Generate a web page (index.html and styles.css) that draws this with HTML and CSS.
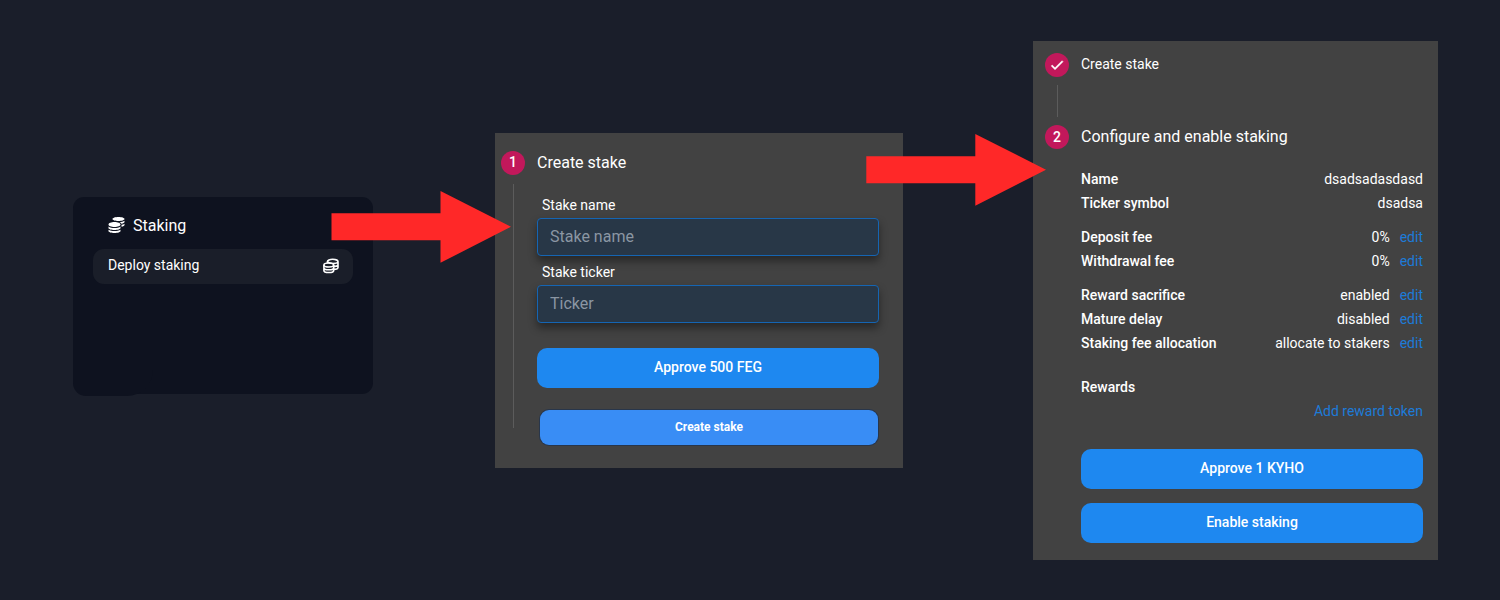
FILE: index.html
```html
<!DOCTYPE html>
<html lang="en">
<head>
<meta charset="utf-8">
<title>Staking</title>
<link rel="stylesheet" href="styles.css">
</head>
<body>
<main class="stage">
  <section class="menu">
    <h2 class="menu-title">
      <svg class="coins" viewBox="0 0 512 512" fill="currentColor"><path d="M0 405.3V448c0 35.3 86 64 192 64s192-28.700 192-64v-42.700C342.700 434.400 267.200 448 192 448S41.300 434.400 0 405.300zM320 128c106 0 192-28.700 192-64S426 0 320 0 128 28.700 128 64s86 64 192 64zM0 300.400V352c0 35.300 86 64 192 64s192-28.700 192-64v-51.600c-41.300 34-116.900 51.600-192 51.600S41.300 334.400 0 300.400zm416 11c57.300-11.100 96-31.700 96-55.400v-42.700c-23.200 16.400-57.300 27.600-96 34.500v63.600zM192 160C86 160 0 195.800 0 240s86 80 192 80 192-35.800 192-80-86-80-192-80zm219.300 56.300c60-10.800 100.700-32 100.700-56.300v-42.700c-35.500 25.100-96.500 38.600-160.700 41.800 29.500 14.300 51.200 33.500 60 57.200z"/></svg>
      <span>Staking</span>
    </h2>
    <div class="menu-item">
      <span>Deploy staking</span>
      <svg class="coins-outline" viewBox="0 0 16 16" fill="none" stroke="currentColor" stroke-width="1.600"><ellipse cx="5.800" cy="7" rx="4.900" ry="2"/><path d="M.9 7v5.400c0 1.200 2 2.100 4.900 2.100s4.900-.9 4.900-2.100V7M.9 9.700c0 1.200 2 2.100 4.900 2.100s4.900-.9 4.900-2.100M4.400 5V3.500c0-1.200 2.300-2.300 5.200-2.300s5.400 1.100 5.400 2.300v5.900c0 1-1.700 1.900-4.300 2.100M4.600 3.800c.8 1.100 2.800 1.700 5 1.700 2.900 0 5.400-.9 5.400-2M10.700 8.600c2.600-.2 4.300-1 4.300-2.100"/></svg>
    </div>
  </section>

  <section class="panel create">
    <header class="step"><span class="badge">1</span><h2 class="step-title">Create stake</h2></header>
    <div class="step-body">
      <label class="label" for="name">Stake name</label>
      <input class="field" id="name" placeholder="Stake name">
      <label class="label" for="ticker">Stake ticker</label>
      <input class="field" id="ticker" placeholder="Ticker">
      <button class="button approve">Approve 500 FEG</button>
      <button class="button submit">Create stake</button>
    </div>
  </section>

  <section class="panel configure">
    <header class="step"><span class="badge"><svg class="check" viewBox="0 0 24 24" fill="currentColor" stroke="currentColor" stroke-width=".8"><path d="M9 16.200 4.800 12l-1.400 1.400L9 19 21 7l-1.400-1.400z"/></svg></span><h3 class="step-title done">Create stake</h3></header>
    <div class="connector"></div>
    <header class="step"><span class="badge">2</span><h2 class="step-title">Configure and enable staking</h2></header>
    <div class="details">
      <div class="row"><b>Name</b><span>dsadsadasdasd</span></div>
      <div class="row"><b>Ticker symbol</b><span>dsadsa</span></div>
      <div class="row first"><b>Deposit fee</b><span>0%</span><a class="link">edit</a></div>
      <div class="row"><b>Withdrawal fee</b><span>0%</span><a class="link">edit</a></div>
      <div class="row first"><b>Reward sacrifice</b><span>enabled</span><a class="link">edit</a></div>
      <div class="row"><b>Mature delay</b><span>disabled</span><a class="link">edit</a></div>
      <div class="row"><b>Staking fee allocation</b><span>allocate to stakers</span><a class="link">edit</a></div>
      <div class="row rewards"><b>Rewards</b></div>
      <div class="row"><b></b><a class="link">Add reward token</a></div>
      <button class="button approve-token">Approve 1 KYHO</button>
      <button class="button enable">Enable staking</button>
    </div>
  </section>

  <svg class="arrow arrow-one" viewBox="0 0 180 72"><path d="M.5 22.300h109V0L180 35.800l-70.500 36V49.300H.5z"/></svg>
  <svg class="arrow arrow-two" viewBox="0 0 180 72"><path d="M.3 22.300h109V0L180 35.800l-70.700 36V49.300H.3z"/></svg>
</main>
</body>
</html>
```
FILE: styles.css
```css
* { box-sizing: border-box; }
body { margin: 0; background: #1a1e2a; color: #fff; font-family: Roboto, sans-serif; font-size: 14px; }
h2, h3 { margin: 0; font-weight: 400; }
svg { display: block; flex: none; }
.stage { position: relative; display: flex; align-items: flex-start; width: 1500px; height: 600px; padding-left: 73px; overflow: hidden; }

.menu { position: relative; width: 300px; height: 197px; margin-top: 197px; padding: 16px 20px 0; border-radius: 11px; background: #0e121f; }
.menu::after { content: ""; position: absolute; left: 0; bottom: -2px; width: 80px; height: 26px; border-radius: 0 0 30px 15px; background: #0e121f; }
.menu { border-bottom-left-radius: 15px; }
.menu-title { display: flex; align-items: center; gap: 8px; height: 24px; padding-left: 15px; font-size: 16px; }
.coins { width: 17px; height: 16px; }
.menu-item { display: flex; align-items: center; justify-content: space-between; height: 35px; margin-top: 12px; padding: 0 14px 3px 15px; border-radius: 11px; background: #1a1e29; }
.coins-outline { width: 16px; height: 16px; margin-top: 1px; }

.panel { flex: none; background: #424242; }
.create { width: 408px; height: 335px; margin: 133px 0 0 122px; padding: 17px 24px 0 6px; }
.step { display: flex; align-items: center; gap: 12px; height: 24px; }
.badge { display: flex; align-items: center; justify-content: center; width: 24px; height: 24px; border-radius: 50%; background: #c2185b; font-weight: 500; }
.step-title { height: 24px; font-size: 16px; line-height: 24px; }
.step-title.done { font-size: 14px; line-height: 22px; }
.create .step { height: 26px; }
.create .badge { padding-bottom: 2px; }
.step-body { display: flex; flex-direction: column; height: 244px; margin: 8px 0 0 12px; padding: 10px 0 0 23px; border-left: 1px solid #5c5c5c; }
.label { flex: none; height: 24px; padding-left: 5px; line-height: 22px; }
.field { flex: none; width: 342px; height: 38px; margin-bottom: 5px; padding: 0 12px 2px; border: 1px solid #1565b3; border-radius: 4px; background: #283747; box-shadow: 0 5px 9px rgba(0,0,0,.42); color: #fff; font: 16px Roboto, sans-serif; }
.field::placeholder { color: #8b96a3; }
.button { display: block; flex: none; width: 342px; height: 40px; padding: 0 0 2px; border: 0; border-radius: 10px; background: #1e88f0; color: #fff; font: 500 14px Roboto, sans-serif; }
.approve { margin-top: 20px; }
.submit { width: 338px; height: 35px; margin: 22px 0 0 3px; border-radius: 9px; background: #398df5; box-shadow: 0 0 0 1px #28364b; font-size: 12px; font-weight: 700; }

.configure { width: 405px; height: 519px; margin: 41px 0 0 130px; padding: 12px 15px 0 12px; }
.check { width: 16px; height: 16px; }
.connector { width: 1px; height: 32px; margin: 8px 0 8px 12px; background: #5c5c5c; }
.details { padding: 18px 0 0 36px; }
.row { display: flex; height: 24px; line-height: 24px; }
.row b { flex: 1; font-weight: 500; }
.row.first { margin-top: 10px; }
.row.rewards { margin-top: 20px; }
.link { color: #1d7bd8; }
.row span + .link { margin-left: 10px; }
.approve-token { margin-top: 26px; }
.enable { margin-top: 14px; }

.arrow { position: absolute; width: 180px; height: 72px; fill: #ff2828; }
.arrow-one { left: 331px; top: 191px; }
.arrow-two { left: 866px; top: 134px; }
```
